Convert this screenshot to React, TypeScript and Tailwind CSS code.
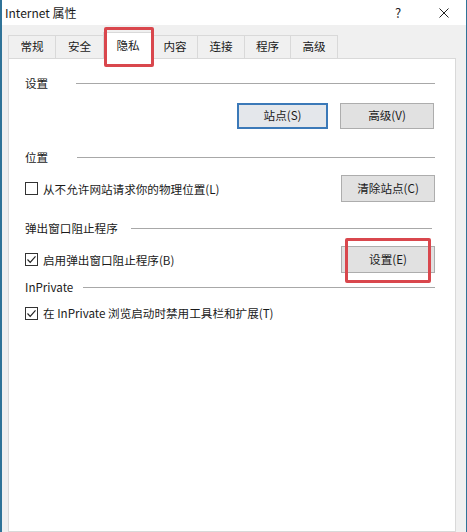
import React from "react";

const font = { fontFamily: '"Noto Sans CJK SC", "Noto Sans", sans-serif' };

function Heading({ text, gap }: { text: string; gap: string }) {
  return (
    <div className="flex items-center h-[16px]">
      <span className="text-[11.6px] leading-[16px] whitespace-nowrap">{text}</span>
      <div className={`flex-1 h-px bg-[#a8a8a8] ${gap}`} />
    </div>
  );
}

function Checkbox({ checked, label }: { checked: boolean; label: string }) {
  return (
    <div className="flex items-center gap-[5px] h-[16px]">
      <div className="w-[13px] h-[13px] border border-[#333333] bg-white flex items-center justify-center">
        {checked && (
          <svg width="11" height="11" viewBox="0 0 11 11">
            <path d="M1.5 5.5 L4.2 8.3 L9.5 2.3" fill="none" stroke="#222" strokeWidth="1.2" />
          </svg>
        )}
      </div>
      <span className="text-[11.6px] leading-[16px] whitespace-nowrap">{label}</span>
    </div>
  );
}

function Btn({ label, focused, w = "w-[94px]", h = "h-[27px]" }: { label: string; focused?: boolean; w?: string; h?: string }) {
  return (
    <div
      className={`${w} ${h} flex items-center justify-center text-[11.6px] ${
        focused ? "border-2 border-[#3b79b8] bg-[#e4e7eb]" : "border border-[#adadad] bg-[#e1e1e1]"
      }`}
    >
      {label}
    </div>
  );
}

function Tab({ label, w, selected }: { label: string; w: string; selected?: boolean }) {
  return (
    <div
      className={`${w} -ml-px first:ml-0 flex items-center justify-center text-[11.6px] border border-[#d9d9d9] border-b-0 ${
        selected ? "h-[27px] bg-white -mb-px relative z-10" : "h-[23px] bg-[#f0f0f0]"
      }`}
    >
      {label}
    </div>
  );
}

export default function App() {
  return (
    <div
      className="relative w-[467px] h-[532px] overflow-hidden bg-[#f0f0f0] border-l-2 border-r border-[#2f7398] flex flex-col text-[#1a1a1a]"
      style={font}
    >
      {/* title bar */}
      <div className="h-[25px] bg-white flex items-center shrink-0">
        <span className="pl-[3px] text-[12px] flex-1">Internet 属性</span>
        <div className="w-[46px] h-[25px] flex items-center justify-center text-[13px] text-[#222]">?</div>
        <div className="w-[45px] h-[25px] flex items-center justify-center">
          <svg width="10" height="10" viewBox="0 0 10 10">
            <path d="M0.5 0.5 L9.5 9.5 M9.5 0.5 L0.5 9.5" stroke="#222" strokeWidth="1" />
          </svg>
        </div>
      </div>

      {/* body */}
      <div className="flex-1 flex flex-col pl-[6px] pr-[10px] pt-[7px]">
        <div className="flex items-end h-[26px]">
          <Tab label="常规" w="w-[48px]" />
          <Tab label="安全" w="w-[49px]" />
          <Tab label="隐私" w="w-[50px]" selected />
          <Tab label="内容" w="w-[46px]" />
          <Tab label="连接" w="w-[48px]" />
          <Tab label="程序" w="w-[47px]" />
          <Tab label="高级" w="w-[48px]" />
        </div>

        <div className="flex-1 bg-white border border-[#d9d9d9] pl-[16px] pr-[20px] pt-[16px] flex flex-col">
          <Heading text="设置" gap="ml-[28px]" />
          <div className="flex justify-end gap-[12px] mt-[12px] pr-[1px]">
            <Btn label="站点(S)" focused w="w-[91px]" h="h-[26px]" />
            <Btn label="高级(V)" h="h-[26px]" />
          </div>

          <div className="mt-[20px]">
            <Heading text="位置" gap="ml-[29px]" />
          </div>
          <div className="flex items-center justify-between mt-[10px]">
            <Checkbox checked={false} label="从不允许网站请求你的物理位置(L)" />
            <Btn label="清除站点(C)" />
          </div>

          <div className="mt-[18px]">
            <Heading text="弹出窗口阻止程序" gap="ml-[13px] mr-[3px]" />
          </div>
          <div className="flex items-center justify-between mt-[10px]">
            <Checkbox checked label="启用弹出窗口阻止程序(B)" />
            <Btn label="设置(E)" />
          </div>

          <div className="mt-[6px]">
            <Heading text="InPrivate" gap="ml-[10px]" />
          </div>
          <div className="mt-[10px]">
            <Checkbox checked label="在 InPrivate 浏览启动时禁用工具栏和扩展(T)" />
          </div>
        </div>
      </div>

      {/* red annotation boxes */}
      <div className="absolute left-[102px] top-[27px] w-[50px] h-[40px] border-[3px] border-[#d9474d] rounded-[2px] z-20" />
      <div className="absolute left-[343px] top-[238px] w-[86px] h-[45px] border-[3px] border-[#d9474d] rounded-[2px] z-20" />
    </div>
  );
}
